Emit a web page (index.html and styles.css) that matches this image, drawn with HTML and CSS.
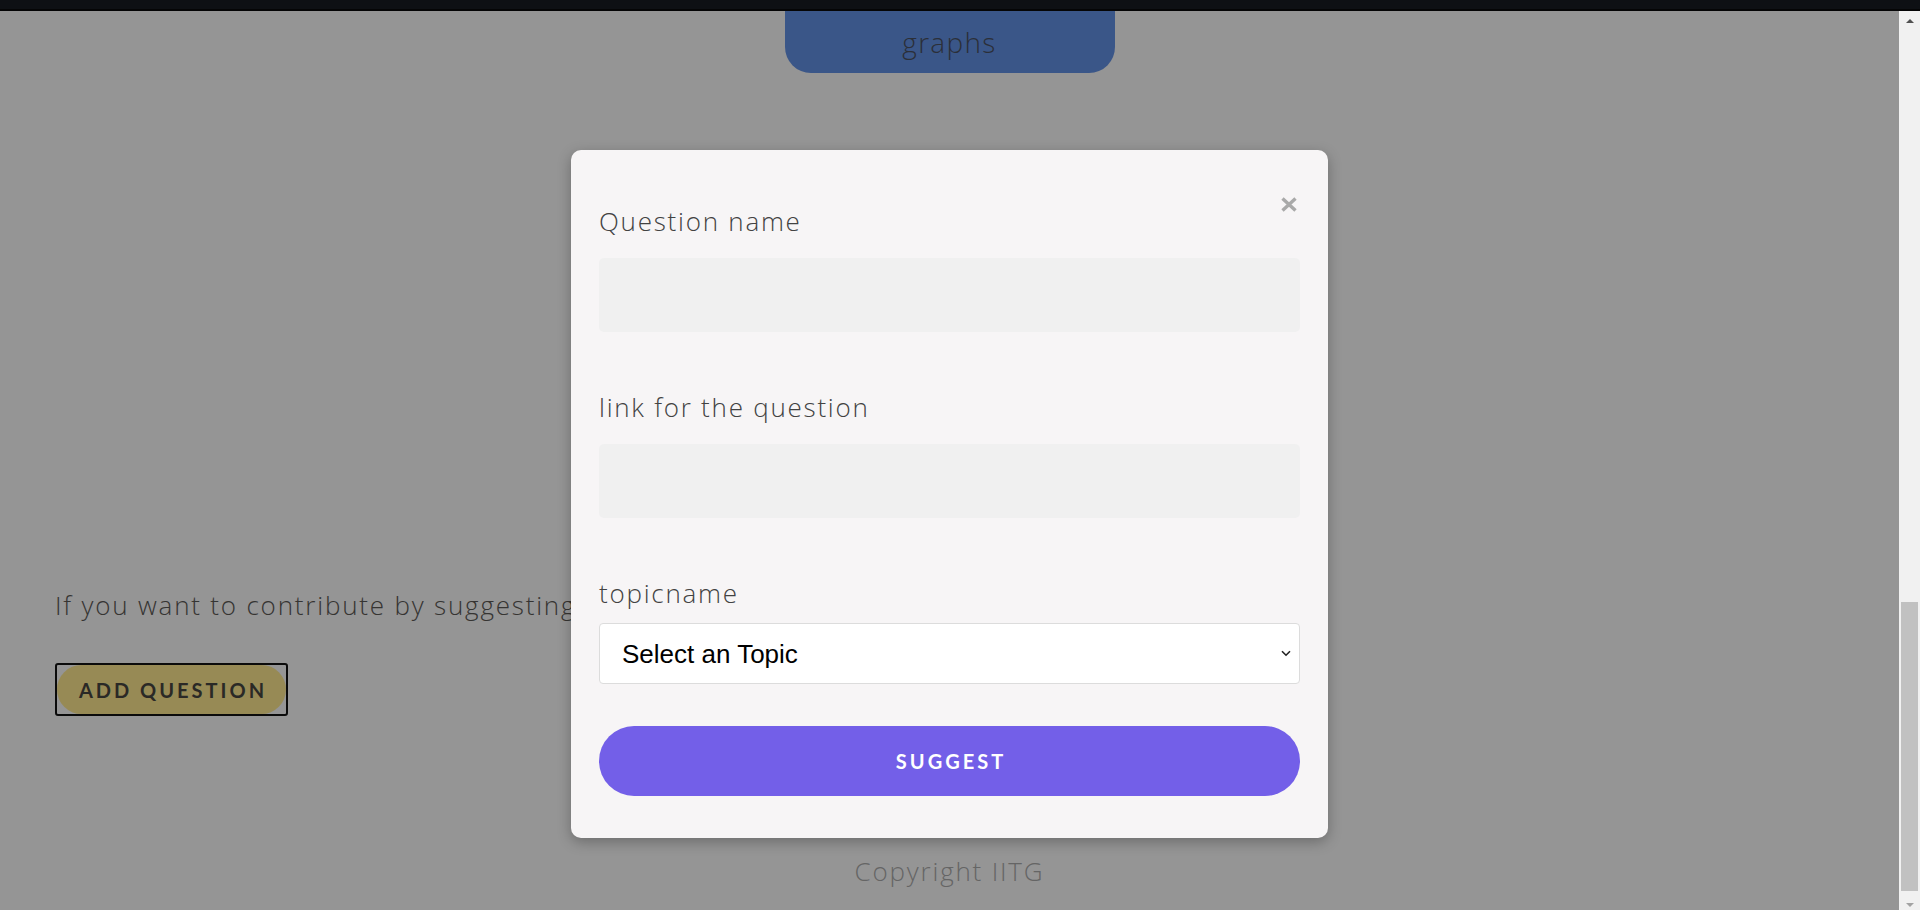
FILE: index.html
```html
<!DOCTYPE html>
<html lang="en">
<head>
<meta charset="utf-8">
<title>Suggest a question</title>
<link rel="stylesheet" href="styles.css">
</head>
<body>
<div class="strip"></div>
<div class="frame">
  <main class="page">
    <div class="tab">graphs</div>
    <p class="intro">If you want to contribute by suggesting a question, click on the button below</p>
    <div class="add-wrap"><button class="add-btn" type="button">ADD QUESTION</button></div>
    <footer class="copy">Copyright IITG</footer>

    <div class="overlay">
      <form class="modal">
        <span class="close" aria-label="close">
          <svg width="18" height="15" viewBox="0 0 18 15"><path d="M2.5 1.5 L15.5 13.5 M15.5 1.5 L2.5 13.5" stroke="#a9a9a9" stroke-width="3.4" fill="none"/></svg>
        </span>
        <label class="label first">Question name</label>
        <input class="field" type="text">
        <label class="label">link for the question</label>
        <input class="field" type="text">
        <label class="label">topicname</label>
        <div class="select-wrap">
          <select class="select"><option>Select an Topic</option></select>
          <svg class="chev" width="10" height="7" viewBox="0 0 10 7"><path d="M1 1.2 L5 5.2 L9 1.2" stroke="#222" stroke-width="1.6" fill="none"/></svg>
        </div>
        <button class="suggest" type="button">SUGGEST</button>
      </form>
    </div>
  </main>
  <div class="scrollbar">
    <div class="sb-btn"><span class="arrow-up"></span></div>
    <div class="sb-track"><div class="sb-thumb"></div></div>
    <div class="sb-btn"><span class="arrow-down"></span></div>
  </div>
</div>
</body>
</html>
```

FILE: styles.css
```css
html, body {
  margin: 0;
  padding: 0;
  height: 910px;
  overflow: hidden;
}
body {
  font-family: "Open Sans", "Lato", sans-serif;
  background: #959595;
}
.strip {
  height: 9px;
  background: #0e1014;
  border-bottom: 2px solid #050506;
}
.frame {
  display: flex;
  height: 899px;
}
.page {
  position: relative;
  flex: 1;
  background: #959595;
  display: flex;
  flex-direction: column;
}
.tab {
  align-self: center;
  width: 330px;
  box-sizing: border-box;
  padding: 16px 0 16px;
  text-align: center;
  background: #3a5688;
  border-radius: 0 0 26px 26px;
  font-size: 28px;
  line-height: 30px;
  font-weight: 300;
  letter-spacing: 1.3px;
  color: #2b2f38;
}
.intro {
  margin: 517px 0 0 55px;
  font-size: 26px;
  line-height: 30px;
  font-weight: 300;
  letter-spacing: 1.8px;
  color: #363432;
  white-space: nowrap;
}
.add-wrap {
  margin: 43px 0 0 55px;
  width: 229px;
  height: 49px;
  border: 2px solid #0b0b0b;
  border-radius: 3px;
  display: flex;
}
.add-btn {
  width: 229px;
  height: 49px;
  border: none;
  border-radius: 25px;
  background: #978a55;
  font-family: "Lato", sans-serif;
  font-weight: 700;
  font-size: 20px;
  letter-spacing: 3px;
  padding: 0 0 0 3px;
  color: #2a2926;
}
.copy {
  margin-top: 140px;
  text-align: center;
  font-size: 26px;
  line-height: 30px;
  font-weight: 300;
  letter-spacing: 1.8px;
  color: #656565;
}

.overlay {
  position: absolute;
  inset: 0;
  display: flex;
  justify-content: center;
  align-items: flex-start;
  padding-top: 139px;
}
.modal {
  position: relative;
  width: 757px;
  box-sizing: border-box;
  padding: 56px 28px 42px;
  background: #f7f5f6;
  border-radius: 10px;
  box-shadow: 0 4px 14px rgba(0, 0, 0, 0.28);
  display: flex;
  flex-direction: column;
}
.close {
  position: absolute;
  top: 47px;
  right: 30px;
  width: 18px;
  height: 15px;
  display: block;
}
.close svg { display: block; }
.label {
  display: block;
  margin-top: 60px;
  font-size: 26px;
  line-height: 30px;
  font-weight: 300;
  letter-spacing: 1.75px;
  color: #424242;
}
.label.first { margin-top: 0; }
.field {
  margin-top: 22px;
  height: 74px;
  border: none;
  border-radius: 5px;
  background: #f0f0f0;
  padding: 0 16px;
  box-sizing: border-box;
  width: 100%;
}
.select-wrap {
  position: relative;
  margin-top: 15px;
}
.select {
  appearance: none;
  -webkit-appearance: none;
  display: block;
  width: 100%;
  height: 61px;
  box-sizing: border-box;
  border: 1px solid #dcdcdc;
  border-radius: 4px;
  background: #ffffff;
  padding: 0 0 0 22px;
  font-family: "Liberation Sans", Arial, sans-serif;
  font-size: 26px;
  color: #000;
}
.chev {
  position: absolute;
  right: 9px;
  top: 27px;
  display: block;
}
.suggest {
  margin-top: 42px;
  height: 70px;
  width: 100%;
  border: none;
  border-radius: 35px;
  background: #735fe8;
  color: #ffffff;
  font-family: "Lato", sans-serif;
  font-weight: 700;
  font-size: 20px;
  letter-spacing: 3px;
  padding: 0 0 0 3px;
}

.scrollbar {
  width: 21px;
  background: #f1f1f1;
  display: flex;
  flex-direction: column;
}
.sb-btn {
  height: 17px;
  display: flex;
  align-items: center;
  justify-content: center;
}
.arrow-up {
  width: 0;
  height: 0;
  border-left: 4.5px solid transparent;
  border-right: 4.5px solid transparent;
  border-bottom: 4.5px solid #505050;
  margin-top: 2px;
}
.arrow-down {
  width: 0;
  height: 0;
  border-left: 4.5px solid transparent;
  border-right: 4.5px solid transparent;
  border-top: 4.5px solid #a3a3a3;
  margin-top: 6px;
}
.sb-track {
  flex: 1;
  display: flex;
  flex-direction: column;
  padding-left: 2px;
}
.sb-thumb {
  margin-top: 574px;
  width: 17px;
  height: 289px;
  background: #c1c1c1;
}
```
